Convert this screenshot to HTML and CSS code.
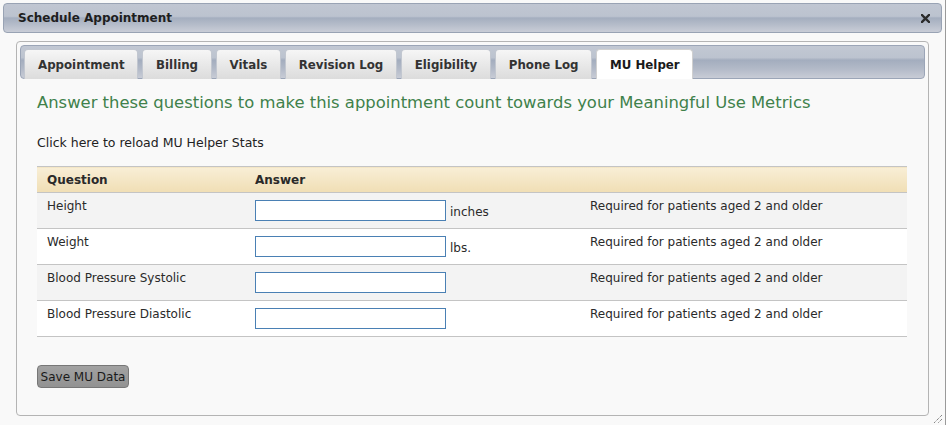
FILE: index.html
```html
<!DOCTYPE html>
<html>
<head>
<meta charset="utf-8">
<title>Schedule Appointment</title>
<link rel="stylesheet" href="styles.css">
</head>
<body>
<div class="dialog">
  <div class="titlebar">
    <span class="title">Schedule Appointment</span>
    <svg class="close" width="9" height="9" viewBox="0 0 9 9"><path d="M1 1 L8 8 M8 1 L1 8" stroke="#2b2b2b" stroke-width="2.4" stroke-linecap="square"/></svg>
  </div>
  <div class="panel">
    <div class="tabbar">
      <a class="tab">Appointment</a>
      <a class="tab">Billing</a>
      <a class="tab">Vitals</a>
      <a class="tab">Revision Log</a>
      <a class="tab">Eligibility</a>
      <a class="tab">Phone Log</a>
      <a class="tab active">MU Helper</a>
    </div>
    <div class="content">
      <h2 class="lead">Answer these questions to make this appointment count towards your Meaningful Use Metrics</h2>
      <p class="reload">Click here to reload MU Helper Stats</p>
      <table class="mu">
        <thead>
          <tr><th class="c1">Question</th><th class="c2">Answer</th><th class="c3"></th></tr>
        </thead>
        <tbody>
          <tr class="odd">
            <td>Height</td>
            <td><div class="answer"><input type="text" class="field"><span class="unit">inches</span></div></td>
            <td>Required for patients aged 2 and older</td>
          </tr>
          <tr>
            <td>Weight</td>
            <td><div class="answer"><input type="text" class="field"><span class="unit">lbs.</span></div></td>
            <td>Required for patients aged 2 and older</td>
          </tr>
          <tr class="odd">
            <td>Blood Pressure Systolic</td>
            <td><div class="answer"><input type="text" class="field"></div></td>
            <td>Required for patients aged 2 and older</td>
          </tr>
          <tr>
            <td>Blood Pressure Diastolic</td>
            <td><div class="answer"><input type="text" class="field"></div></td>
            <td>Required for patients aged 2 and older</td>
          </tr>
        </tbody>
      </table>
      <button class="save" type="button">Save MU Data</button>
    </div>
  </div>
  <svg class="grip" width="11" height="11" viewBox="0 0 11 11"><path d="M10 2 L2 10 M10 6 L6 10" stroke="#555" stroke-width="1" stroke-dasharray="1 1"/></svg>
</div>
</body>
</html>
```
FILE: styles.css
```css
html, body {
  margin: 0;
  padding: 0;
  background: #ffffff;
}
body {
  font-family: "DejaVu Sans", "Liberation Sans", sans-serif;
  color: #222;
}
.dialog {
  position: relative;
  box-sizing: border-box;
  width: 946px;
  height: 425px;
  padding: 3px 3px 0 3px;
  background: #f9f9f9;
  border-right: 1px solid #9a9a9a;
}
.titlebar {
  box-sizing: border-box;
  height: 30px;
  display: flex;
  align-items: center;
  justify-content: space-between;
  padding: 0 11px 0 14px;
  border: 1px solid #99a3b4;
  border-radius: 4px;
  background: linear-gradient(#c0c6d2 0%, #bcc3cf 44%, #a4aebf 50%, #b6bdca 75%, #c9cdd7 100%);
}
.title {
  font-size: 12px;
  font-weight: bold;
  color: #1e1e1e;
}
.close {
  display: block;
  margin-top: 1px;
}
.panel {
  box-sizing: border-box;
  width: 913px;
  height: 375px;
  margin: 8px 0 0 13px;
  padding: 3px;
  border: 1px solid #b4b4b4;
  border-radius: 4px;
  background: #f9f9f9;
}
.tabbar {
  box-sizing: border-box;
  height: 34px;
  display: flex;
  align-items: flex-end;
  gap: 4px;
  padding: 0 3px;
  border: 1px solid #9ba5b7;
  border-radius: 4px;
  background: linear-gradient(#c2c8d3 0%, #bcc3cf 36%, #a3adbe 44%, #b3bac8 72%, #c8ccd6 100%);
}
.tab {
  box-sizing: border-box;
  height: 30px;
  margin-bottom: -1px;
  padding: 0 12.5px 0 13px;
  display: flex;
  align-items: center;
  font-size: 11.8px;
  font-weight: bold;
  color: #333;
  border: 1px solid #c2c7d0;
  border-bottom: none;
  border-radius: 4px 4px 0 0;
  background: linear-gradient(#f6f6f6, #e6e6e6 60%, #dcdcdc);
}
.tab.active {
  background: #ffffff;
  color: #1a1a1a;
  border-color: #d0d0d0;
}
.content {
  padding: 14px 18px 0 17px;
}
.lead {
  margin: 0;
  font-size: 16.4px;
  line-height: 20px;
  font-weight: normal;
  color: #40814b;
}
.reload {
  margin: 21px 0 0 0;
  font-size: 12.5px;
  line-height: 18px;
  color: #222;
}
.mu {
  width: 100%;
  margin-top: 14px;
  border-collapse: collapse;
  border-top: 1px solid #c4c4c4;
  font-size: 12px;
}
.mu th {
  height: 25px;
  padding: 0 10px;
  text-align: left;
  font-weight: bold;
  color: #2a2a2a;
  border-bottom: 1px solid #c4c4c4;
  background: linear-gradient(#f8eed6, #f0deb4);
}
.mu .c1 { width: 188px; }
.mu .c2 { width: 315px; }
.mu td {
  height: 30px;
  padding: 5px 10px 0 10px;
  vertical-align: top;
  line-height: 16px;
  color: #2a2a2a;
  border-bottom: 1px solid #c4c4c4;
  background: #ffffff;
}
.mu tr.odd td {
  background: #f3f3f3;
}
.answer {
  display: flex;
  align-items: center;
  gap: 4px;
  margin-top: 2px;
}
.field {
  box-sizing: border-box;
  width: 191px;
  height: 21px;
  margin: 0;
  padding: 0 3px;
  border: 1px solid #4a80b4;
  background: #ffffff;
  font: inherit;
}
.unit {
  margin-top: 2px;
}
.save {
  display: block;
  box-sizing: border-box;
  margin-top: 28px;
  width: 92px;
  height: 23px;
  padding: 0;
  border: 1px solid #777777;
  border-radius: 4px;
  background: linear-gradient(#a2a2a2, #929292);
  font-family: inherit;
  font-size: 12px;
  color: #1a1a1a;
}
.grip {
  position: absolute;
  right: 2px;
  bottom: 1px;
}
```
